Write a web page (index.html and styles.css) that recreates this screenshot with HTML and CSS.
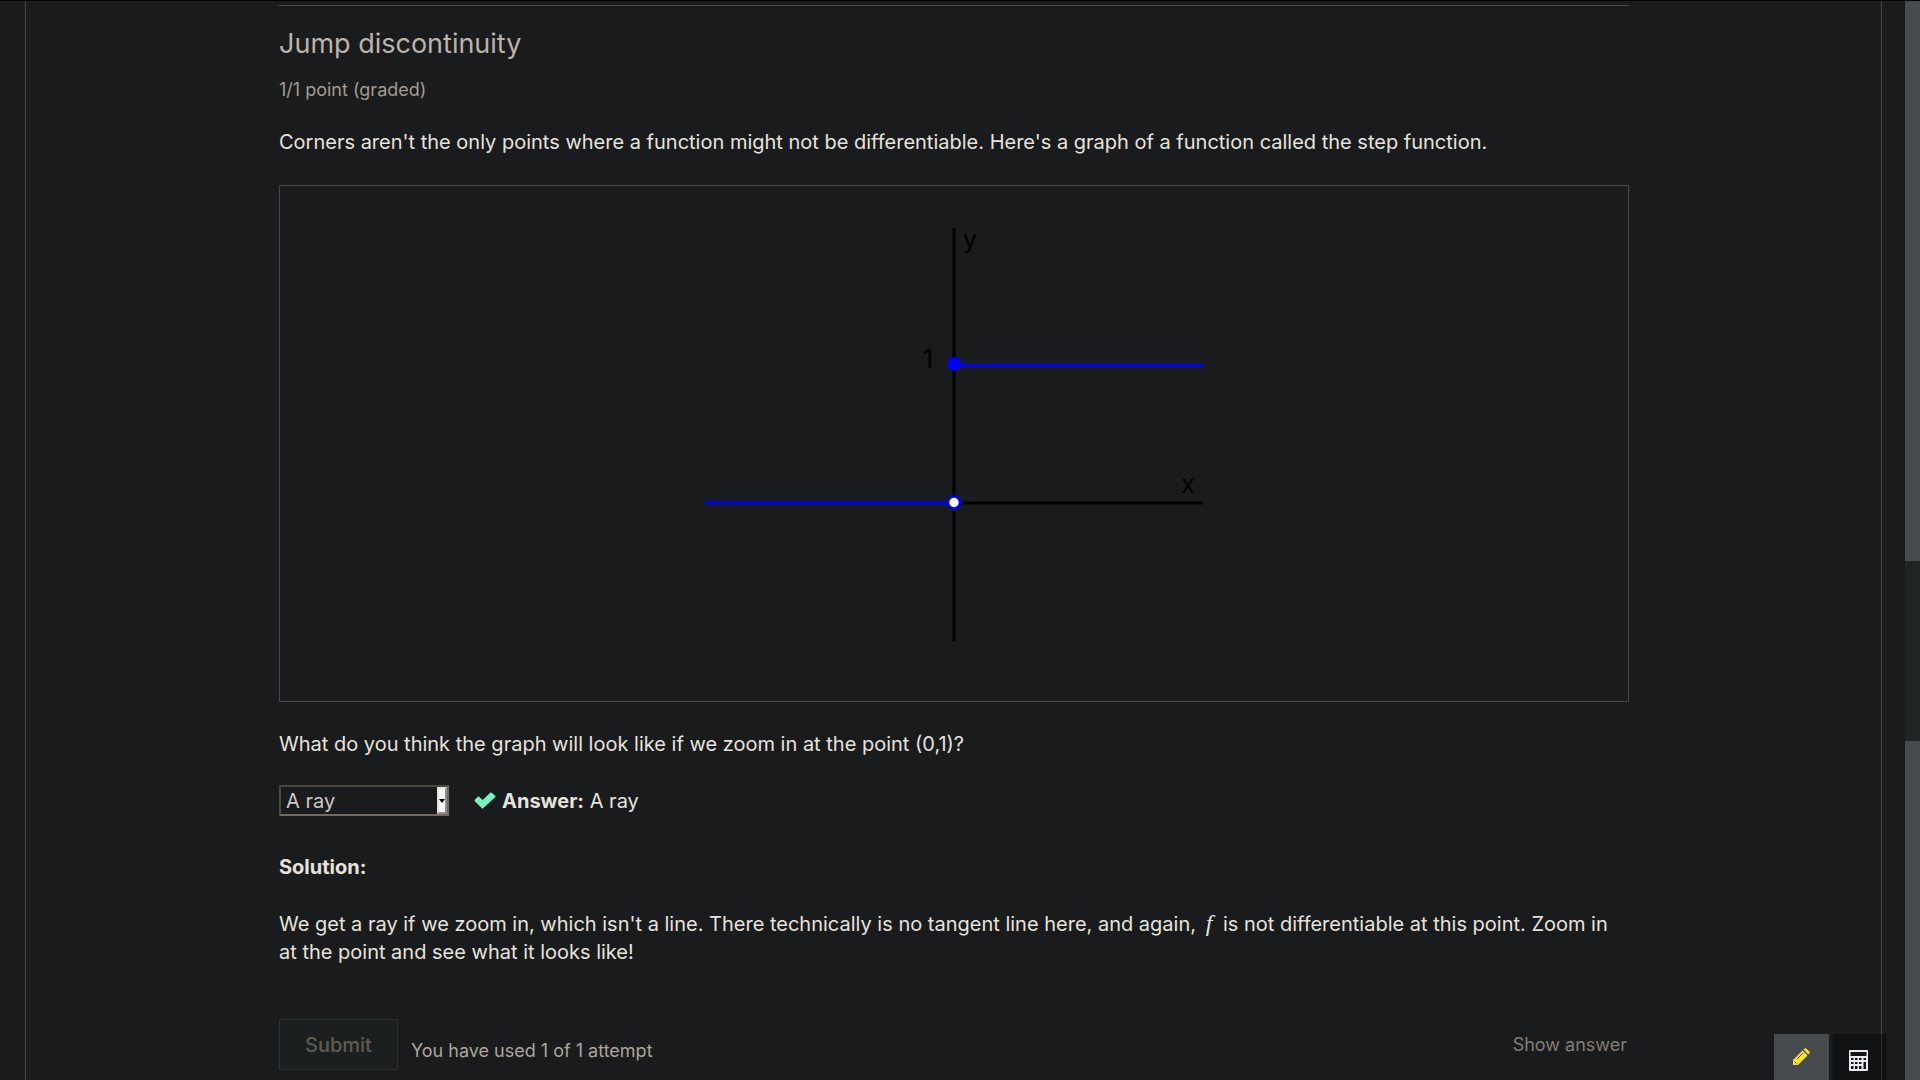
FILE: index.html
```html
<!DOCTYPE html>
<html lang="en">
<head>
<meta charset="utf-8">
<title>Jump discontinuity</title>
<link rel="stylesheet" href="styles.css">
</head>
<body>
<div class="viewport">
  <main class="course">
    <article class="problem">
      <h3 class="problem-title">Jump discontinuity</h3>
      <p class="progress">1/1 point (graded)</p>
      <p class="text">Corners aren't the only points where a function might not be differentiable. Here's a graph of a function called the step function.</p>
      <figure class="graph">
        <svg width="500" height="433" viewBox="0 -20 500 433" role="img" aria-label="Graph of the step function">
          <path d="M250 0V413M250 275H499" stroke="#000" stroke-width="3" fill="none"/>
          <path d="M1 275H250M250 137.500H499" stroke="#00f" stroke-width="3" fill="none"/>
          <circle cx="250" cy="136" r="7" fill="#00f"/>
          <circle cx="250" cy="274.500" r="6" fill="#fff" stroke="#00f" stroke-width="2.500"/>
          <text class="graph-label" x="259" y="20">y</text>
          <text class="graph-label" x="219" y="140">1</text>
          <text class="graph-label" x="477" y="265">x</text>
        </svg>
      </figure>
      <label class="text question" for="answer">What do you think the graph will look like if we zoom in at the point (0,1)?</label>
      <div class="response">
        <span class="select-wrap">
          <select class="select" id="answer"><option>A ray</option></select>
          <span class="select-arrow"></span>
        </span>
        <svg class="check" width="22" height="17" viewBox="0 0 22 17" aria-hidden="true"><path d="M1.500 8.500L4.500 5.500L8.500 9.500L17 1.500L20.500 4.500L8.500 15.500Z" fill="#76f0be" stroke="#76f0be" stroke-width="2" stroke-linejoin="round"/></svg>
        <span class="text"><strong>Answer:</strong> A ray</span>
      </div>
      <p class="text solution-title"><strong>Solution:</strong></p>
      <p class="text">We get a ray if we zoom in, which isn't a line. There technically is no tangent line here, and again, <i class="math">f</i> is not differentiable at this point. Zoom in at the point and see what it looks like!</p>
      <div class="actions">
        <button class="submit" type="button" disabled>Submit</button>
        <span class="attempts">You have used 1 of 1 attempt</span>
        <button class="show-answer" type="button">Show answer</button>
      </div>
    </article>
  </main>
  <div class="scrollbar"><div class="thumb"></div></div>
  <div class="tools">
    <button class="tool tool-notes" type="button" aria-label="Notes">
      <svg width="18" height="18" viewBox="0 0 18 18"><path d="M1 12L10.500 2.500L15.500 7.500L6 17H1Z" fill="#fee12f"/><path d="M11.500 1.500L12.500 .5Q13.500 -.3 14.500 .7L17.300 3.500Q18.200 4.500 17.300 5.500L16.400 6.500Z" fill="#fee12f"/><path d="M5 11L11 5M2.500 13.500L4.500 15.500" stroke="#474b4e" stroke-width="1" fill="none"/></svg>
    </button>
    <button class="tool tool-calc" type="button" aria-label="Calculator">
      <svg width="19" height="21" viewBox="0 0 19 21"><rect width="19" height="21" rx="1" fill="#efe9ef"/><path d="M1.500 2H17.500V6H1.500ZM2 8H4.500V10H2ZM6 8H8.500V10H6ZM10 8H12.500V10H10ZM14.500 8H17V10H14.500ZM2 12H4.500V14H2ZM6 12H8.500V14H6ZM10 12H12.500V14H10ZM14.500 12H17V19H14.500ZM2 16H4.500V19H2ZM6 16H8.500V19H6ZM10 16H12.500V19H10Z" fill="#121315"/></svg>
    </button>
  </div>
</div>
</body>
</html>
```
FILE: styles.css
```css
* { box-sizing: border-box; }
body {
  margin: 0;
  background: #1a1b1d;
  color: #e6e3de;
  font: 20px/28px Inter, sans-serif;
}
.viewport {
  display: flex;
  height: 100vh;
  overflow: hidden;
  border-top: 1px solid #000;
}
.course {
  flex: 1;
  margin: 0 23px 0 25px;
  padding: 4px 252px 0 253px;
  border: 1px solid #45484a;
  border-width: 0 1px;
}
.problem { border-top: 1px solid #45484a; }
p, h3, figure { margin: 0; }
.problem-title {
  padding-top: 20px;
  color: #bab4ab;
  font-size: 27px;
  font-weight: 400;
  line-height: 36px;
}
.progress {
  margin: 16px 0 26px;
  color: #a29b90;
  font-size: 18px;
  line-height: 24px;
}
.graph {
  display: flex;
  justify-content: center;
  margin: 29px 0 28px;
  padding: 22px 0 60px;
  border: 1px solid #45484a;
}
.graph-label { font-size: 25px; fill: #000; }
.question { display: block; }
.response {
  display: flex;
  align-items: center;
  margin: 27px 0 37px;
}
.select-wrap { position: relative; display: flex; width: 170px; margin-right: 25px; }
.select {
  appearance: none;
  width: 100%;
  height: 31px;
  padding: 0 5px;
  border: 2px solid;
  border-color: #4d483f #736a5c #736a5c #4d483f;
  border-radius: 0;
  background: #1a1b1d;
  color: #cdc8c0;
  font: inherit;
}
.select-arrow {
  position: absolute;
  top: 2px;
  right: 2px;
  bottom: 2px;
  display: grid;
  place-items: center;
  width: 10px;
  border: 2px solid;
  border-color: #e3e3e3 #8f8f8f #8f8f8f #e3e3e3;
  background: #f6f5f4;
  pointer-events: none;
}
.select-arrow::before {
  content: "";
  border: 3px solid transparent;
  border-top: 4px solid #000;
  border-bottom: 0;
}
.check { margin-right: 6px; }
.solution-title { margin-bottom: 29px; }
.math { margin: 0 5px 0 4px; font: italic 24px/20px "Liberation Serif", serif; }
.actions { display: flex; align-items: center; margin-top: 53px; }
button { font-family: inherit; }
.submit {
  height: 51px;
  padding: 0 25px;
  border: 1px solid #2d3032;
  background: #1b1f20;
  color: #605c54;
  font-size: 20px;
  font-weight: 500;
}
.attempts { margin: 12px auto 0 13px; color: #ada69c; font-size: 18px; }
.show-answer {
  padding: 0 2px;
  border: 0;
  background: none;
  color: #827e76;
  font-size: 18px;
}
.scrollbar { width: 15px; padding-top: 560px; background: #464b4e; }
.thumb { height: 180px; background: #202425; }
.tools { position: fixed; right: 34px; bottom: 0; display: flex; gap: 4px; }
.tool {
  display: flex;
  justify-content: center;
  height: 46px;
  border: 0;
  padding: 14px 0 0;
}
.tool-notes { width: 55px; background: #474b4e; padding-right: 2px; }
.tool-calc { width: 53px; padding: 16px 2px 0 0; background: rgba(0, 0, 0, .35); }
```
